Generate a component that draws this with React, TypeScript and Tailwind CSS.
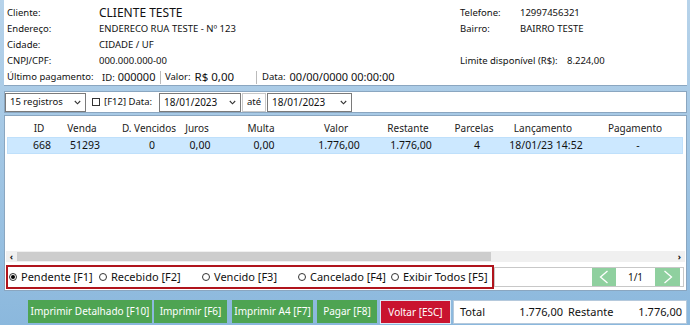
import React from 'react';

const cols = [
  { cls: 'ml-[13px] w-[42px]', h: 'ID', v: '668' },
  { cls: 'w-[44px]', h: 'Venda', v: '51293' },
  { cls: 'ml-[16px] w-[58px]', h: 'D. Vencidos', v: '0' },
  { cls: 'w-[38px]', h: 'Juros', v: '0,00' },
  { cls: 'ml-[26px] w-[38px]', h: 'Multa', v: '0,00' },
  { cls: 'ml-[24px] w-[64px]', h: 'Valor', v: '1.776,00' },
  { cls: 'ml-[8px] w-[64px]', h: 'Restante', v: '1.776,00' },
  { cls: 'ml-[12px] w-[44px]', h: 'Parcelas', v: '4' },
  { cls: 'ml-[8px] w-[78px]', h: 'Lançamento', v: '18/01/23 14:52' },
  { cls: 'ml-[16px] w-[74px]', h: 'Pagamento', v: '-' },
];

const radios = [
  { label: 'Pendente [F1]', on: true, cls: 'w-[90px]' },
  { label: 'Recebido [F2]', on: false, cls: 'w-[103px]' },
  { label: 'Vencido [F3]', on: false, cls: 'w-[96px]' },
  { label: 'Cancelado [F4]', on: false, cls: 'w-[93px]' },
  { label: 'Exibir Todos [F5]', on: false, cls: 'flex-1' },
];

const Chevron = () => (
  <svg width="7" height="5" viewBox="0 0 7 5" className="shrink-0">
    <path d="M0.8 1 L3.5 3.8 L6.2 1" fill="none" stroke="#333" strokeWidth="1.1" />
  </svg>
);

const Radio = ({ on }: { on: boolean }) => (
  <span className="w-[8px] h-[8px] rounded-full border border-[#333] flex items-center justify-center shrink-0">
    {on && <span className="w-[4px] h-[4px] rounded-full bg-black" />}
  </span>
);

const PageArrow = ({ dir }: { dir: 'l' | 'r' }) => (
  <svg width="14" height="16" viewBox="0 0 14 16">
    <path d={dir === 'l' ? 'M10.5 2 L3.5 8 L10.5 14' : 'M3.5 2 L10.5 8 L3.5 14'} fill="none" stroke="#fff" strokeWidth="1.3" />
  </svg>
);

export default function App() {
  return (
    <div className="w-[690px] h-[325px] overflow-hidden bg-gradient-to-b from-[#b7d3ea] to-[#8bb8dd] pl-[4px] pr-[3px] flex flex-col font-['Noto_Sans',sans-serif] text-[#111]">
      {/* dados do cliente */}
      <div className="h-[86px] shrink-0 bg-white border-b border-[#8aa6c0] pt-[5px] text-[9.5px]">
        <div className="h-[16px] flex items-center">
          <span className="pl-[3px] w-[95px]">Cliente:</span>
          <span className="w-[361px] text-[12px] leading-none">CLIENTE TESTE</span>
          <span className="w-[60px]">Telefone:</span>
          <span>12997456321</span>
        </div>
        <div className="h-[16px] flex items-center">
          <span className="pl-[3px] w-[95px]">Endereço:</span>
          <span className="w-[361px]">ENDERECO RUA TESTE - Nº 123</span>
          <span className="w-[60px]">Bairro:</span>
          <span>BAIRRO TESTE</span>
        </div>
        <div className="h-[16px] flex items-center">
          <span className="pl-[3px] w-[95px]">Cidade:</span>
          <span>CIDADE / UF</span>
        </div>
        <div className="h-[16px] flex items-center">
          <span className="pl-[3px] w-[95px]">CNPJ/CPF:</span>
          <span className="w-[361px]">000.000.000-00</span>
          <span className="w-[107px]">Limite disponível (R$):</span>
          <span>8.224,00</span>
        </div>
        <div className="h-[16px] flex items-center">
          <span className="pl-[3px] w-[98px]">Último pagamento:</span>
          <span className="w-[58px] flex items-baseline gap-[3px]">
            ID: <span className="text-[11px]">000000</span>
          </span>
          <span className="w-[96px] h-[13px] border-l border-[#bbb] pl-[4px] flex items-center gap-[4px]">
            Valor: <span className="text-[11.5px]">R$ 0,00</span>
          </span>
          <span className="h-[13px] border-l border-[#bbb] pl-[5px] flex items-center gap-[4px]">
            Data: <span className="text-[11px]">00/00/0000 00:00:00</span>
          </span>
        </div>
      </div>

      {/* filtros */}
      <div className="mt-[5px] h-[22px] shrink-0 bg-white border border-[#8aa6c0] flex items-center text-[9.5px]">
        <div className="w-[81px] h-[19px] border border-[#7a7a7a] flex items-center justify-between pl-[4px] pr-[4px]">
          <span>15 registros</span>
          <Chevron />
        </div>
        <div className="ml-[6px] flex items-center gap-[4px]">
          <span className="w-[8px] h-[8px] border border-[#333]" />
          <span>[F12] Data:</span>
        </div>
        <div className="ml-[7px] w-[82px] h-[19px] border border-[#7a7a7a] flex items-center justify-between pl-[4px] pr-[4px] text-[10px]">
          <span>18/01/2023</span>
          <Chevron />
        </div>
        <div className="ml-[1px] w-[24px] h-[19px] border border-[#c8c8c8] flex items-center justify-center">até</div>
        <div className="ml-[1px] w-[85px] h-[19px] border border-[#7a7a7a] flex items-center justify-between pl-[4px] pr-[4px] text-[10px]">
          <span>18/01/2023</span>
          <Chevron />
        </div>
      </div>

      {/* tabela */}
      <div className="mt-[2px] h-[176px] shrink-0 bg-white border border-[#8aa6c0] flex flex-col">
        <div className="mt-[4px] h-[17px] flex items-center text-[10px] text-[#222]">
          {cols.map((c) => (
            <span key={c.h} className={`${c.cls} shrink-0 text-center`}>{c.h}</span>
          ))}
        </div>
        <div className="ml-[2px] mr-[3px] h-[17px] bg-[#cce8ff] border border-[#bfe0fb] flex items-center text-[10.5px]">
          {cols.map((c) => (
            <span key={c.h} className={`${c.cls} shrink-0 text-center`}>{c.v}</span>
          ))}
        </div>
        <div className="flex-1" />
        <div className="h-[11px] mx-[1px] bg-[#f0f0f0] flex items-center">
          <span className="w-[11px] flex justify-center text-[9px] font-bold leading-none">‹</span>
          <span className="w-[474px] h-[9px] bg-[#cdcdcd]" />
          <span className="flex-1" />
          <span className="w-[11px] flex justify-center text-[9px] font-bold leading-none">›</span>
        </div>
        <div className="mt-[3px] mb-[1px] h-[24px] flex items-center">
          <div className="ml-[1px] w-[488px] h-[24px] border-2 border-[#b0141c] flex items-center text-[11px] pl-[1px]">
            {radios.map((r) => (
              <div key={r.label} className={`${r.cls} flex items-center gap-[4px]`}>
                <Radio on={r.on} />
                <span>{r.label}</span>
              </div>
            ))}
          </div>
          <div className="w-[190px] h-[20px] border border-[#c8c8c8] flex items-center text-[10px]">
            <div className="flex-1" />
            <div className="w-[24px] h-[18px] bg-[#8fd09f] flex items-center justify-center"><PageArrow dir="l" /></div>
            <div className="w-[39px] text-center">1/1</div>
            <div className="w-[25px] h-[18px] bg-[#8fd09f] flex items-center justify-center"><PageArrow dir="r" /></div>
            <div className="w-[3px]" />
          </div>
        </div>
      </div>

      {/* botões */}
      <div className="pt-[9px] flex items-start text-[10px] text-white">
        <button className="ml-[24px] w-[124px] h-[23px] bg-[#4ea452]">Imprimir Detalhado [F10]</button>
        <button className="ml-[2px] w-[73px] h-[23px] bg-[#4ea452]">Imprimir [F6]</button>
        <button className="ml-[5px] w-[81px] h-[23px] bg-[#4ea452]">Imprimir A4 [F7]</button>
        <button className="ml-[4px] w-[60px] h-[23px] bg-[#4ea452]">Pagar [F8]</button>
        <button className="ml-[3px] w-[71px] h-[24px] bg-[#c9142f] border border-[#dbe9f5]">Voltar [ESC]</button>
        <div className="ml-[2px] w-[234px] h-[24px] bg-white border border-[#b5c9dc] flex items-center text-[11px] text-[#111] pl-[6px] pr-[4px]">
          <span className="w-[56px]">Total</span>
          <span className="w-[47px] text-right">1.776,00</span>
          <span className="ml-[5px]">Restante</span>
          <span className="flex-1 text-right">1.776,00</span>
        </div>
      </div>
    </div>
  );
}
